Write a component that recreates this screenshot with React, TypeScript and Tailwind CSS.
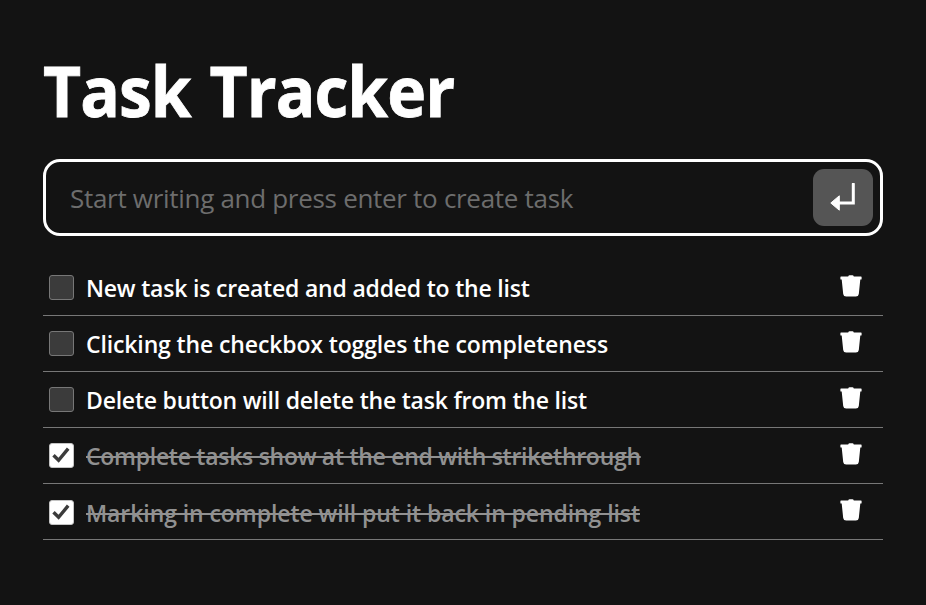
import { useState } from "react";

type Task = { id: number; text: string; done: boolean; spacing: string; offset: string; textOffset: string };

const initialTasks: Task[] = [
  { id: 1, text: "New task is created and added to the list", done: false, spacing: "tracking-[-0.2px]", offset: "mt-[15px]", textOffset: "mt-[12px]" },
  { id: 2, text: "Clicking the checkbox toggles the completeness", done: false, spacing: "tracking-[-0.13px]", offset: "mt-[15px]", textOffset: "mt-[12px]" },
  { id: 3, text: "Delete button will delete the task from the list", done: false, spacing: "tracking-[-0.22px]", offset: "mt-[15px]", textOffset: "mt-[12px]" },
  { id: 4, text: "Complete tasks show at the end with strikethrough", done: true, spacing: "tracking-[-0.28px]", offset: "mt-[15px]", textOffset: "mt-[12px]" },
  { id: 5, text: "Marking in complete will put it back in pending list", done: true, spacing: "tracking-[-0.08px]", offset: "mt-[16px]", textOffset: "mt-[13px]" },
];

function TrashIcon() {
  return (
    <svg width="22" height="22" viewBox="0 0 22 22" fill="white">
      <path d="M1 1.500h7.200Q8.600.2 9.500.2h3Q13.400.2 13.800 1.500h7.200q.6 0 .6.6V4q0 .6-.6.6h-.7L18.800 19q-.3 2.500-3 2.500H6.200q-2.700 0-3-2.500L1.700 4.600H1Q.4 4.600.4 4V2.100Q.4 1.500 1 1.500Z" />
    </svg>
  );
}

function EnterIcon() {
  return (
    <svg width="26" height="28" viewBox="0 0 26 28" fill="none" className="-translate-y-[1px]">
      <path d="M23.300 1V20H9" stroke="white" strokeWidth="3" strokeLinejoin="miter" strokeLinecap="round" />
      <path d="M.8 20 9.300 12.800V27.200Z" fill="white" stroke="white" strokeWidth="1" strokeLinejoin="round" />
    </svg>
  );
}

function Checkbox({ done, onClick, className }: { done: boolean; onClick: () => void; className: string }) {
  return (
    <button
      role="checkbox"
      aria-checked={done}
      onClick={onClick}
      className={`ml-[6.500px] flex size-[24.500px] shrink-0 items-center justify-center rounded-[3px] border ${done ? "border-[#c4c4c4] bg-white" : "border-[#777] bg-[#3b3b3b]"} ${className}`}
    >
      {done && (
        <svg width="18" height="18" viewBox="0 0 18 18" fill="none">
          <path d="M1.500 9.300 6.600 14.300 16.200 2.700" stroke="#3b3b3b" strokeWidth="3.400" />
        </svg>
      )}
    </button>
  );
}

export default function App() {
  const [tasks, setTasks] = useState(initialTasks);
  const toggle = (id: number) => setTasks(tasks.map((t) => (t.id === id ? { ...t, done: !t.done } : t)));
  const remove = (id: number) => setTasks(tasks.filter((t) => t.id !== id));

  return (
    <main className="h-[605px] overflow-hidden bg-[#131313] pr-[43.500px] pl-[42.500px] font-['Open_Sans','Noto_Sans',sans-serif] text-white">
      <h1 className="h-[140px] origin-left scale-x-[0.94] pt-[42px] text-[70px] leading-[96px] font-bold tracking-[-1px] whitespace-nowrap [-webkit-text-stroke:0.8px_white] [word-spacing:3px]">Task Tracker</h1>
      <div className="mt-[19px] flex h-[77px] items-center rounded-[17px] border-3 border-white pr-[7px] pl-[24.500px]">
        <input
          placeholder="Start writing and press enter to create task"
          className="h-[60px] min-w-0 flex-1 bg-transparent text-[26px] tracking-[-0.3px] outline-none placeholder:text-[#6d6d6d]"
        />
        <button aria-label="Create task" className="flex h-[57px] w-[60px] items-center justify-center rounded-[11px] bg-[#555]">
          <EnterIcon />
        </button>
      </div>
      <ul className="mt-[24px]">
        {tasks.map((t) => (
          <li key={t.id} className="flex h-[56px] items-start border-b border-[#777]">
            <Checkbox done={t.done} onClick={() => toggle(t.id)} className={t.offset} />
            <span className={`ml-[12.500px] flex-1 text-[23px] leading-[32px] font-semibold whitespace-nowrap ${t.spacing} ${t.textOffset} ${t.done ? "text-[#919191] line-through decoration-2" : ""}`}>
              {t.text}
            </span>
            <button aria-label="Delete task" onClick={() => remove(t.id)} className="mt-[15px] mr-[21px]">
              <TrashIcon />
            </button>
          </li>
        ))}
      </ul>
    </main>
  );
}
